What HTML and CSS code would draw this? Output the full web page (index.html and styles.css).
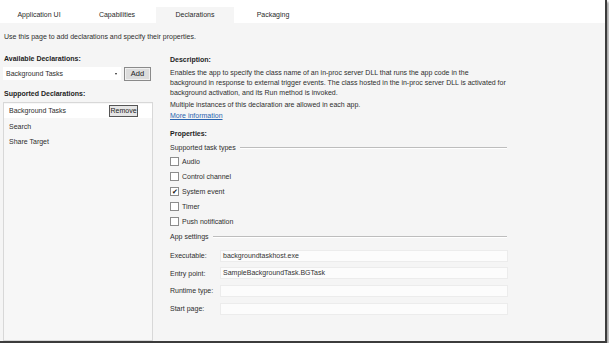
FILE: index.html
```html
<!doctype html>
<html>

<head>
    <meta charset="utf-8">
    <meta name="viewport" content="width=device-width, initial-scale=1.0">
    <title>Declarations</title>
    <link rel="stylesheet" href="styles.css">
</head>

<body>
    <div class="window">
        <!-- Вкладки -->
        <div class="tabs">
            <div class="tab">Application UI</div>
            <div class="tab">Capabilities</div>
            <div class="tab active">Declarations</div>
            <div class="tab">Packaging</div>
        </div>

        <div class="page">
            <div class="intro">Use this page to add declarations and specify their properties.</div>

            <div class="columns">
                <!-- Ліва колонка -->
                <div class="left">
                    <div class="heading">Available Declarations:</div>
                    <div class="add-row">
                        <div class="select">Background Tasks<span class="arrow"></span></div>
                        <div class="btn add-btn">Add</div>
                    </div>
                    <div class="heading supported">Supported Declarations:</div>
                    <ul class="decl-list">
                        <li class="selected">Background Tasks<span class="btn remove-btn">Remove</span></li>
                        <li>Search</li>
                        <li>Share Target</li>
                    </ul>
                </div>

                <!-- Права колонка -->
                <div class="right">
                    <div class="heading">Description:</div>
                    <p class="desc">Enables the app to specify the class name of an in-proc server DLL that runs the app code in the background in response to external trigger events. The class hosted in the in-proc server DLL is activated for background activation, and its Run method is invoked.</p>
                    <p class="multi">Multiple instances of this declaration are allowed in each app.</p>
                    <a class="more" href="#">More information</a>

                    <div class="heading props">Properties:</div>
                    <div class="group-title">Supported task types</div>
                    <div class="checks">
                        <div class="check"><span class="box"></span>Audio</div>
                        <div class="check"><span class="box"></span>Control channel</div>
                        <div class="check"><span class="box checked">&#10004;</span>System event</div>
                        <div class="check"><span class="box"></span>Timer</div>
                        <div class="check"><span class="box"></span>Push notification</div>
                    </div>

                    <div class="group-title app">App settings</div>
                    <div class="fields">
                        <div class="field"><span class="label">Executable:</span><span class="input">backgroundtaskhost.exe</span></div>
                        <div class="field"><span class="label">Entry point:</span><span class="input">SampleBackgroundTask.BGTask</span></div>
                        <div class="field"><span class="label">Runtime type:</span><span class="input"></span></div>
                        <div class="field"><span class="label">Start page:</span><span class="input"></span></div>
                    </div>
                </div>
            </div>
        </div>
    </div>
</body>

</html>
```

FILE: styles.css
```css
body {
    font-family: "Liberation Sans", Arial, sans-serif;
    font-size: 7px;
    color: #2e2e2e;
    margin: 0;
    padding: 0;
    background: #fff;
}

.window {
    width: 605px;
    height: 341px;
    border-right: 2px solid #3c3c3c;
    border-bottom: 2px solid #3c3c3c;
    box-shadow: 2px 2px 2px rgba(0, 0, 0, 0.35);
    display: flex;
    flex-direction: column;
    background: #fff;
}

.tabs {
    display: flex;
    height: 23px;
    padding-top: 7px;
    box-sizing: border-box;
}

.tab {
    width: 78px;
    text-align: center;
    line-height: 16px;
    color: #2a2a2a;
}

.tab.active {
    background: #f5f5f5;
}

.page {
    flex: 1;
    background: #f5f5f5;
    padding: 9px 0 0 4px;
    display: flex;
    flex-direction: column;
}

.intro {
    line-height: 10px;
}

.columns {
    flex: 1;
    display: flex;
    margin-top: 12px;
}

.heading {
    font-weight: bold;
    color: #1e1e1e;
    line-height: 10px;
}

.left {
    width: 150px;
    display: flex;
    flex-direction: column;
    margin-left: -1px;
}

.left .heading {
    margin-left: 1px;
}

.add-row {
    display: flex;
    margin-top: 3px;
    gap: 3px;
}

.select {
    width: 118px;
    height: 13px;
    line-height: 13px;
    background: #fff;
    padding-left: 3px;
    box-sizing: border-box;
    position: relative;
}

.arrow {
    position: absolute;
    right: 4px;
    top: 6px;
    border-left: 1.5px solid transparent;
    border-right: 1.5px solid transparent;
    border-top: 2px solid #222;
}

.btn {
    display: inline-block;
    background: #dcdcdc;
    border: 1px solid #8a8a8a;
    box-shadow: inset 0 0 0 1px #f0f0f0;
    text-align: center;
    color: #222;
    box-sizing: border-box;
}

.add-btn {
    width: 27px;
    height: 14px;
    line-height: 12px;
    font-size: 7.5px;
}

.supported {
    margin-top: 8px;
}

.decl-list {
    flex: 1;
    list-style: none;
    margin: 3px 0 0 0;
    padding: 1px 0 0 0;
    border: 1px solid #d8d8d8;
    background: #f7f7f7;
}

.decl-list li {
    height: 15px;
    line-height: 15px;
    padding-left: 5px;
    position: relative;
}

.decl-list li.selected {
    background: #fff;
    height: 14px;
    line-height: 14px;
    margin-bottom: 1px;
}

.remove-btn {
    position: absolute;
    left: 105px;
    top: 1px;
    width: 29px;
    height: 12px;
    line-height: 10px;
    box-shadow: none;
    background: #e6e6e6;
    border-color: #555;
}

.right {
    width: 337px;
    margin-left: 17px;
    padding-top: 1px;
}

.right p {
    margin: 0;
    line-height: 10px;
}

.desc {
    margin-top: 3px !important;
}

.multi {
    margin-top: 2px !important;
}

.more {
    display: block;
    margin-top: 1px;
    line-height: 10px;
    color: #2a64b0;
    text-decoration: underline;
}

.props {
    margin-top: 8px;
}

.group-title {
    display: flex;
    align-items: center;
    gap: 4px;
    line-height: 10px;
    margin-top: 4px;
}

.group-title::after {
    content: "";
    flex: 1;
    border-top: 1px solid #bdbdbd;
    border-bottom: 1px solid #fff;
}

.group-title.app {
    margin-top: 3px;
}

.checks {
    margin-top: 1px;
}

.check {
    height: 15px;
    display: flex;
    align-items: center;
}

.box {
    width: 9px;
    height: 9px;
    border: 1px solid #8c8c8c;
    background: #fff;
    box-sizing: border-box;
    margin-right: 3px;
    font-size: 7px;
    line-height: 7px;
    text-align: center;
    color: #111;
}

.fields {
    margin-top: 5px;
}

.field {
    height: 17.6px;
    display: flex;
    align-items: center;
}

.label {
    width: 51px;
}

.input {
    flex: 1;
    height: 10px;
    line-height: 10px;
    background: #fcfcfc;
    box-shadow: 0 0 0 1px #ececec;
    padding-left: 2px;
    color: #333;
}
```
